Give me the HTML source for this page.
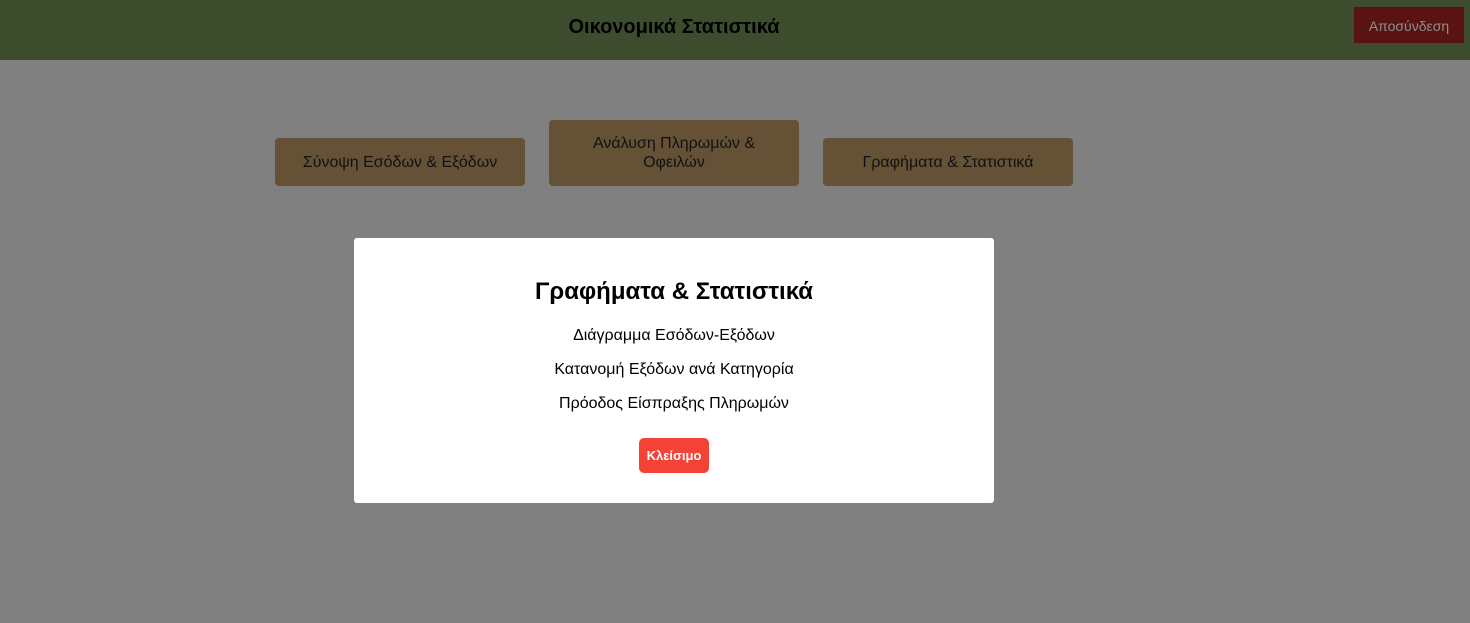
<!DOCTYPE html>
<html><head><meta charset="utf-8"><style>
*{margin:0;padding:0;box-sizing:border-box}
body{width:1470px;height:623px;background:#808080;font-family:"Liberation Sans",Arial,sans-serif;position:relative;overflow:hidden}
.hdr{position:absolute;left:0;top:0;width:1470px;height:60px;background:#3e4c2e}
.hdr h1{position:absolute;left:0;width:1348px;top:16px;text-align:center;font-size:20px;font-weight:bold;color:#000}
.out{position:absolute;left:1354px;top:7px;width:110px;height:36px;background:#5a1313;color:#8e8e8e;font-size:14px;line-height:38px;text-align:center}
.nb{position:absolute;width:250px;background:#655236;border-radius:4px;color:#111;font-size:16px;text-align:center;display:flex;align-items:center;justify-content:center;line-height:19px}
.modal{position:absolute;left:354px;top:238px;width:640px;height:265px;background:#fff;border-radius:3px;text-align:center}
.t{position:absolute;left:0;right:0;text-align:center}
.close{position:absolute;left:285px;top:200px;width:70px;height:35px;background:#f44336;color:#fff;font-weight:bold;font-size:13px;line-height:35px;border-radius:5px}
</style></head><body>
<div class="hdr"><h1>Οικονομικά Στατιστικά</h1><div class="out">Αποσύνδεση</div></div>
<div class="nb" style="left:275px;top:138px;height:48px">Σύνοψη Εσόδων &amp; Εξόδων</div>
<div class="nb" style="left:549px;top:120px;height:66px">Ανάλυση Πληρωμών &amp;<br>Οφειλών</div>
<div class="nb" style="left:823px;top:138px;height:48px">Γραφήματα &amp; Στατιστικά</div>
<div class="modal">
<div class="t" style="top:40px;font-size:24px;font-weight:bold">Γραφήματα &amp; Στατιστικά</div>
<div class="t" style="top:89px;font-size:16px">Διάγραμμα Εσόδων-Εξόδων</div>
<div class="t" style="top:123px;font-size:16px">Κατανομή Εξόδων ανά Κατηγορία</div>
<div class="t" style="top:157px;font-size:16px">Πρόοδος Είσπραξης Πληρωμών</div>
<div class="close">Κλείσιμο</div>
</div>
</body></html>
